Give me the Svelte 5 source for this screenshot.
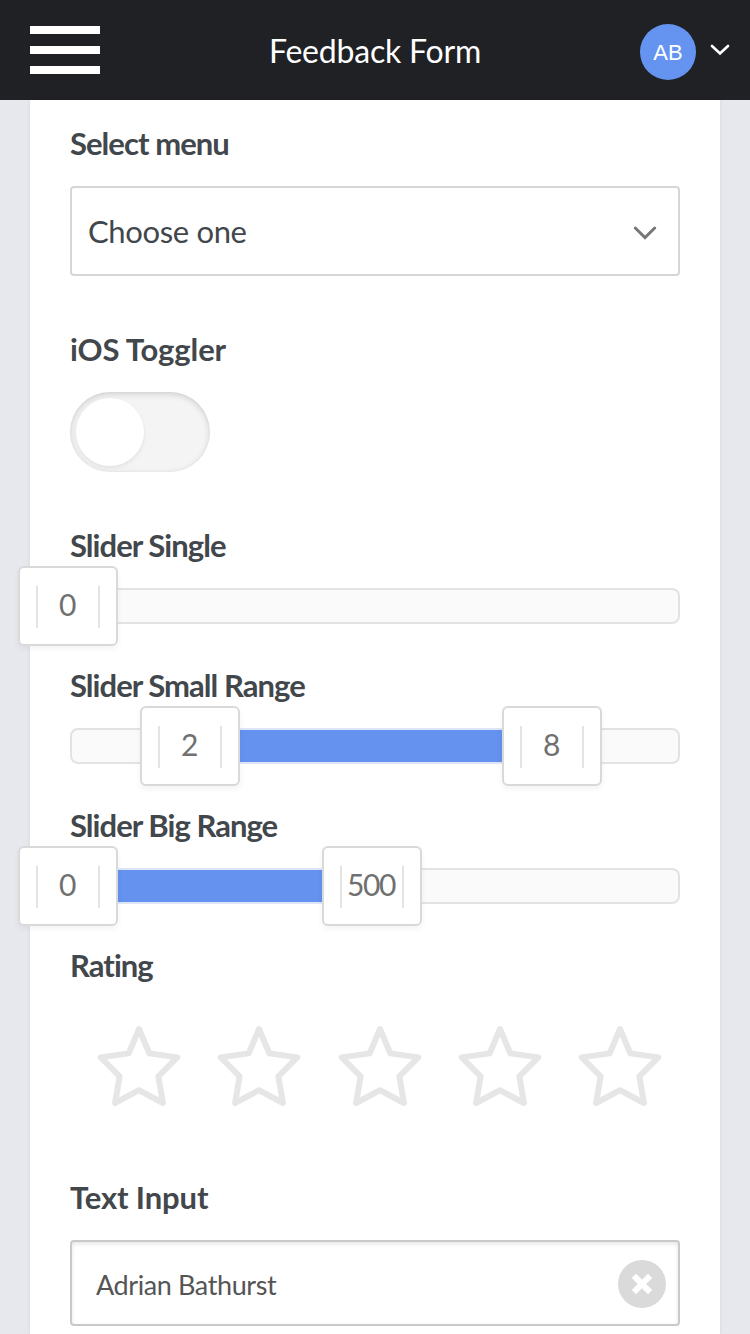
<script>
  const sliders = [
    { label: 'Slider Single', fill: null, handles: [{ value: 0, x: -54 }] },
    { label: 'Slider Small Range', fill: [118, 480], handles: [{ value: 2, x: 68 }, { value: 8, x: 430 }] },
    { label: 'Slider Big Range', fill: [0, 300], handles: [{ value: 0, x: -54 }, { value: 500, x: 250 }] }
  ];
  const stars = [1, 2, 3, 4, 5];
</script>

<div class="page">
  <header>
    <div class="burger"><i></i><i></i><i></i></div>
    <h1>Feedback Form</h1>
    <div class="user">
      <span class="avatar">AB</span>
      <svg width="20" height="14" viewBox="0 0 20 14"><path d="M2 3 L10 10.5 L18 3" fill="none" stroke="#fff" stroke-width="2.6" stroke-linecap="round" /></svg>
    </div>
  </header>

  <main>
    <section class="select-field">
      <div class="label">Select menu</div>
      <div class="select">
        <span>Choose one</span>
        <svg width="26" height="18" viewBox="0 0 26 18"><path d="M3.3 5 L13 14.6 L22.7 5" fill="none" stroke="#777" stroke-width="3" stroke-linecap="round" /></svg>
      </div>
    </section>

    <section class="toggle-field">
      <div class="label wide">iOS Toggler</div>
      <div class="toggle"><span></span></div>
    </section>

    {#each sliders as s}
      <section class="slider-field">
        <div class="label">{s.label}</div>
        <div class="track">
          {#if s.fill}
            <div class="fill" style="left:{s.fill[0]}px;width:{s.fill[1] - s.fill[0]}px"></div>
          {/if}
          {#each s.handles as h}
            <div class="handle" style="left:{h.x}px"><span>{h.value}</span></div>
          {/each}
        </div>
      </section>
    {/each}

    <section class="rating-field">
      <div class="label">Rating</div>
      <div class="stars">
        {#each stars as star (star)}
          <svg width="84" height="84" viewBox="0 0 84 84">
            <path d="M42 5 L52.3 29.4 L80.3 33.4 L61.4 52.4 L65.9 79 L42 66.2 L18.1 79 L22.6 52.4 L3.7 33.4 L31.7 29.4 Z" fill="none" stroke="#e6e6e6" stroke-width="6" stroke-linejoin="round" />
          </svg>
        {/each}
      </div>
    </section>

    <section>
      <div class="label wide">Text Input</div>
      <div class="input">
        <span>Adrian Bathurst</span>
        <svg width="48" height="48" viewBox="0 0 48 48">
          <circle cx="24" cy="24" r="24" fill="#dadada" />
          <path d="M17.3 17.3 L30.7 30.7 M30.7 17.3 L17.3 30.7" stroke="#fff" stroke-width="6.6" stroke-linecap="square" stroke-linejoin="round" transform="translate(2.4 2.4) scale(.9)" />
        </svg>
      </div>
    </section>
  </main>
</div>

<style>
  :global(body) { background: #e7e8ed; overflow: hidden; }
  .page {
    height: 1334px;
    overflow: hidden;
    display: flex;
    flex-direction: column;
    font-family: Lato, sans-serif;
    color: #42474c;
  }
  header {
    height: 100px;
    flex: none;
    box-sizing: border-box;
    padding: 0 20px 0 30px;
    background: #202125;
    display: grid;
    grid-template-columns: 80px 1fr 90px;
    align-items: center;
  }
  .burger { display: flex; flex-direction: column; gap: 12px; width: 70px; }
  .burger i { height: 8px; background: #fff; }
  h1 {
    margin: 0;
    padding-top: 2px;
    font-size: 32px;
    line-height: 40px;
    font-weight: 400;
    letter-spacing: -.2px;
    color: #fff;
    text-align: center;
    white-space: nowrap;
  }
  .user { display: flex; align-items: center; gap: 14px; }
  .avatar {
    flex: none;
    width: 56px;
    height: 56px;
    margin-top: 4px;
    border-radius: 50%;
    background: #6494ef;
    color: #fff;
    font: 22px/57px "Liberation Sans", sans-serif;
    text-align: center;
  }
  .user svg { flex: none; margin-top: -1px; }
  main {
    flex: 1;
    margin: 0 30px;
    padding: 24px 40px 0;
    background: #fff;
    box-shadow: 0 0 4px rgba(0, 0, 0, .08);
  }
  .label {
    height: 40px;
    margin-bottom: 22px;
    font-size: 31px;
    line-height: 38px;
    font-weight: 700;
    letter-spacing: -.95px;
    white-space: nowrap;
  }
  .label.wide { letter-spacing: -.12px; }
  .select-field { height: 206px; }
  .select {
    box-sizing: border-box;
    height: 90px;
    border: 2px solid #d6d6d6;
    border-radius: 4px;
    padding: 0 20px 0 16px;
    display: flex;
    align-items: center;
    justify-content: space-between;
    font-size: 31px;
    letter-spacing: -.35px;
  }
  .select svg { margin-top: 2px; }
  .toggle-field { height: 196px; }
  .toggle {
    box-sizing: border-box;
    width: 140px;
    height: 80px;
    padding: 6px;
    border-radius: 40px;
    background: #f4f4f4;
    box-shadow: inset 0 2px 6px rgba(0, 0, 0, .15), inset 0 0 2px rgba(0, 0, 0, .06);
  }
  .toggle span {
    display: block;
    width: 68px;
    height: 68px;
    border-radius: 50%;
    background: #fff;
    box-shadow: 0 2px 4px rgba(0, 0, 0, .08);
  }
  .slider-field { height: 140px; }
  .track {
    position: relative;
    box-sizing: border-box;
    height: 36px;
    border: 2px solid #e2e2e2;
    border-radius: 8px;
    background: #fafafa;
  }
  .fill {
    position: absolute;
    top: -2px;
    height: 32px;
    border: solid #dce6f8;
    border-width: 2px 0;
    background: #6492ee;
  }
  .handle {
    position: absolute;
    top: -24px;
    box-sizing: border-box;
    width: 100px;
    height: 80px;
    padding: 18px 16px 0;
    border: 2px solid #d9d9d9;
    border-radius: 6px;
    background: #fff;
    box-shadow: 0 3px 6px rgba(0, 0, 0, .05);
  }
  .handle span {
    display: flex;
    justify-content: center;
    box-sizing: border-box;
    height: 42px;
    padding-right: 2px;
    border: solid #e4e4e4;
    border-width: 0 2px;
    font-size: 30px;
    line-height: 37px;
    letter-spacing: -1.4px;
    color: #707070;
  }
  .rating-field { height: 232px; }
  .stars {
    display: flex;
    justify-content: space-between;
    margin: 38px 18px 0 27px;
  }
  .input {
    box-sizing: border-box;
    height: 86px;
    border: 2px solid #c9c9c9;
    border-radius: 4px;
    padding: 2px 12px 0 24px;
    display: flex;
    align-items: center;
    justify-content: space-between;
    font-size: 27px;
    letter-spacing: -.4px;
    color: #555;
    box-shadow: inset 0 2px 4px rgba(0, 0, 0, .1);
  }
</style>
